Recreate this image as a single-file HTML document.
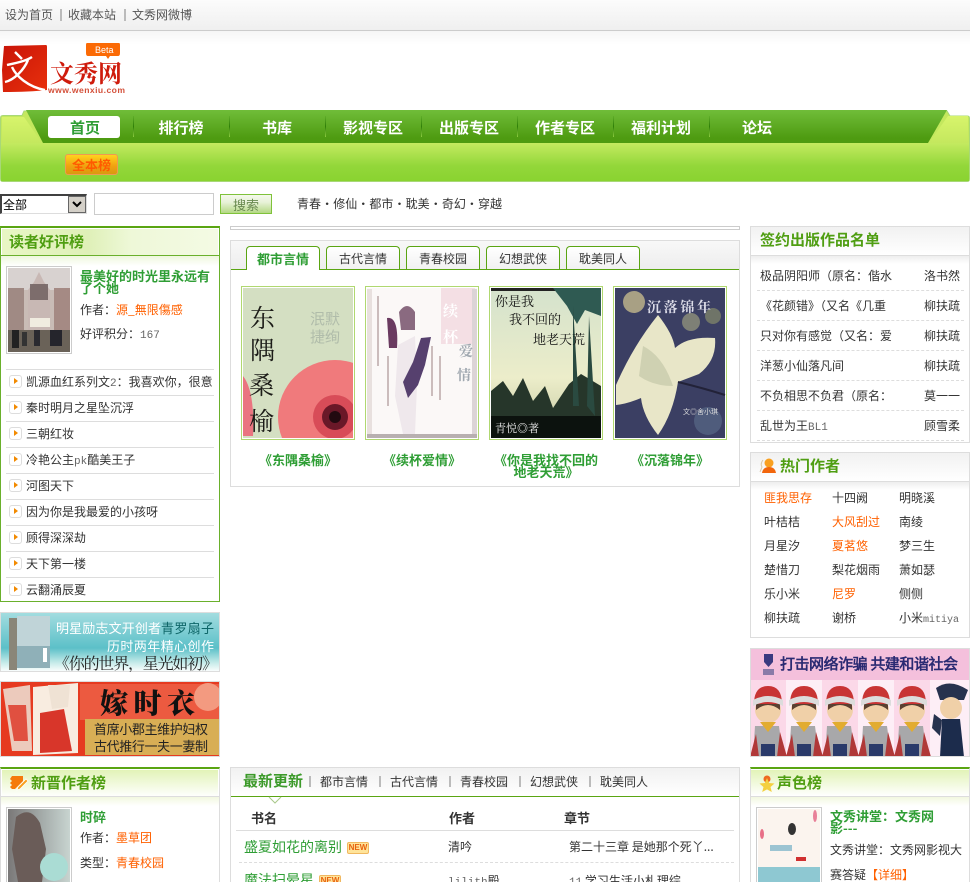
<!DOCTYPE html>
<html lang="zh"><head><meta charset="utf-8"><title>文秀网</title>
<style>
html,body{margin:0;padding:0;background:#fff;width:970px;height:882px;overflow:hidden}
#w{width:970px;height:882px;overflow:hidden;position:relative;font:12px/16px "WenQuanYi Zen Hei","Noto Sans CJK SC",sans-serif;color:#333}
.a{position:absolute;white-space:nowrap}
.b{position:absolute;box-sizing:border-box}
.g{font-weight:bold;color:#2f9e35}
.o{color:#ff6000}
.h{font-weight:bold;font-size:15px;color:#4f9e12}
.nav{position:absolute;top:119px;width:96px;text-align:center;color:#fff;font-weight:bold;font-size:15px;line-height:18px}
.sep{position:absolute;top:116px;width:1px;height:21px;background:linear-gradient(#5fae28,#2f7f08,#8ccc40)}
.ln{position:absolute;height:1px;background:#ddd}
.dash{position:absolute;height:0;border-top:1px dashed #ddd}
.ic{position:absolute;left:9px;width:11px;height:11px;border:1px solid #ddd;border-radius:3px;background:#fff}
.ic:after{content:"";position:absolute;left:4px;top:2px;border-left:4px solid #f28a00;border-top:3px solid transparent;border-bottom:3px solid transparent}
.tab{position:absolute;top:246px;width:74px;height:23px;box-sizing:border-box;border:1px solid #5aa512;border-bottom:0;border-radius:4px 4px 0 0;background:linear-gradient(#fff,#f1f1f1);text-align:center;line-height:23px}
.cap{position:absolute;width:114px;text-align:center;font-size:13px;line-height:12px;font-weight:bold;color:#2f9e35}
.new{position:absolute;width:20px;height:10px;border:1px solid #f0b860;background:#ffe49a;color:#e8600c;font:bold 8px/10px "Liberation Sans",sans-serif;text-align:center;border-radius:2px}
.m{font-family:"Liberation Mono",monospace;font-size:11px;color:#666}
.dot{display:inline-block;width:12.200px;text-align:center}
svg{position:absolute;display:block}
</style></head><body><div id="w">

<!-- top bar -->
<div class="b" style="left:0;top:0;width:970px;height:31px;background:linear-gradient(#fcfcfc,#efefef);border-bottom:1px solid #ccc"></div>
<div class="b" style="left:0;top:31px;width:970px;height:14px;background:linear-gradient(#f6f6f6,#fff)"></div>
<div class="a" style="left:5px;top:7px;color:#555">设为首页</div>
<div class="b" style="left:60px;top:9px;width:2px;height:12px;background:#bbb"></div>
<div class="a" style="left:68px;top:7px;color:#555">收藏本站</div>
<div class="b" style="left:124px;top:9px;width:2px;height:12px;background:#bbb"></div>
<div class="a" style="left:132px;top:7px;color:#555">文秀网微博</div>

<!-- logo -->
<svg style="left:0;top:40px" width="130" height="56" viewBox="0 0 130 56">
<defs><linearGradient id="rd" x1="0" y1="0" x2="1" y2="1"><stop offset="0" stop-color="#c81408"/><stop offset="1" stop-color="#e8300c"/></linearGradient></defs>
<path d="M4 6 L46 5 Q47 5 47 7 L47 50 Q30 52 3 52 L2 30Z" fill="url(#rd)"/>
<path d="M15 12 L22 19 M7 25 C16 23 26 21 32 17 M28 20 C24 30 14 40 5 42 M12 27 C16 36 28 47 45 50" fill="none" stroke="#fff" stroke-width="2.400"/>
<path d="M87 3 H119 Q120 3 120 5 V13 Q120 16 118 16 H110 L108 19 L106 16 H88 Q86 16 86 13 V5 Q86 3 87 3Z" fill="#fb6a05"/>
<text x="95" y="13" font-family="Liberation Sans" font-size="9" fill="#fff">Beta</text>
<text x="50" y="42" font-family="Noto Serif CJK SC" font-weight="700" font-size="24" fill="#cf1b0c">文秀网</text>
<text x="48" y="53" font-family="Liberation Sans" font-weight="700" font-size="8.600" fill="#d4503a" textLength="77">www.wenxiu.com</text>
</svg>

<!-- nav -->
<svg style="left:0;top:108px" width="970" height="76" viewBox="0 0 970 76">
<defs>
<linearGradient id="d" x1="0" y1="0" x2="0" y2="1"><stop offset="0" stop-color="#70bd39"/><stop offset=".85" stop-color="#4e9b11"/><stop offset="1" stop-color="#4e9b11"/></linearGradient>
<linearGradient id="l" x1="0" y1="0" x2="0" y2="1"><stop offset="0" stop-color="#c4ea60"/><stop offset=".6" stop-color="#93d73a"/><stop offset="1" stop-color="#8ad330"/></linearGradient>
<linearGradient id="t" x1="0" y1="0" x2="0" y2="1"><stop offset="0" stop-color="#d8f46c"/><stop offset="1" stop-color="#c4e85e"/></linearGradient>
</defs>
<path d="M.5 10 Q.5 7.500 3 7.500 H22 L24 3 H947 L950 8 H967 Q969.500 8 969.500 10 V71 Q969.500 73.500 967 73.500 H3 Q.5 73.500 .5 71Z" fill="#c4e85e" stroke="#a8d878"/>
<rect x="1" y="35" width="968" height="38" fill="url(#l)"/>
<path d="M26 2 H947 L928 35 H43Z" fill="url(#d)"/>
<path d="M2 9 H24 L42 35 H2Z M948 8 H968 V35 H929Z" fill="url(#t)"/>
</svg>
<div class="b" style="left:48px;top:116px;width:72px;height:22px;background:#fff;border-radius:3px"></div>
<div class="nav" style="left:37px;color:#2f9e35">首页</div>
<div class="nav" style="left:133px">排行榜</div>
<div class="nav" style="left:229px">书库</div>
<div class="nav" style="left:325px">影视专区</div>
<div class="nav" style="left:421px">出版专区</div>
<div class="nav" style="left:517px">作者专区</div>
<div class="nav" style="left:613px">福利计划</div>
<div class="nav" style="left:709px">论坛</div>
<div class="sep" style="left:133px"></div><div class="sep" style="left:229px"></div><div class="sep" style="left:325px"></div><div class="sep" style="left:421px"></div><div class="sep" style="left:517px"></div><div class="sep" style="left:613px"></div><div class="sep" style="left:709px"></div>
<div class="b" style="left:65px;top:154px;width:53px;height:21px;border-radius:3px;background:linear-gradient(#ffd21e,#f0a010 60%,#d89a10);border:1px solid #ef9a50;text-align:center;font-weight:bold;font-size:13px;line-height:20px;color:#ff5a00">全本榜</div>

<!-- search -->
<div class="b" style="left:0;top:194px;width:87px;height:20px;background:#d4d0c8;border-top:2px solid #404040;border-left:2px solid #404040;border-right:1px solid #ddd;border-bottom:1px solid #ddd"><div class="b" style="left:0;top:0;width:66px;height:17px;background:#fff;line-height:18px;padding-left:1px;color:#000">全部</div>
<div class="b" style="left:66px;top:0;width:18px;height:17px;background:#d4d0c8;border:1px solid #666"><svg width="16" height="15" style="left:0;top:0"><path d="M4 5 L8 9 L12 5" fill="none" stroke="#000" stroke-width="2"/></svg></div></div>
<div class="b" style="left:94px;top:193px;width:120px;height:22px;border:1px solid #ccc;background:#fff"></div>
<div class="b" style="left:220px;top:194px;width:52px;height:20px;border:1px solid #7fc23a;background:linear-gradient(#f4f8ec,#e8f2d8 40%,#b4d884);text-align:center;line-height:19px;font-size:13px;color:#6a8a50">搜索</div>
<div class="a" style="left:297px;top:196px;color:#333">青春<span class="dot">·</span>修仙<span class="dot">·</span>都市<span class="dot">·</span>耽美<span class="dot">·</span>奇幻<span class="dot">·</span>穿越</div>

<!-- left panel 1 -->
<div class="b" style="left:0;top:226px;width:220px;height:376px;border:1px solid #6ab02c;border-top:2px solid #5aa512"></div>
<div class="b" style="left:2px;top:229px;width:216px;height:26px;background:linear-gradient(90deg,#e8f6c4,#dff0b8 40%,#eef8d8 60%,#f4fae4)"></div>
<div class="b" style="left:1px;top:255px;width:218px;height:1px;background:#6ab02c"></div>
<div class="b" style="left:1px;top:256px;width:218px;height:10px;background:linear-gradient(#eef7dd,#fff)"></div>
<div class="a h" style="left:9px;top:234px">读者好评榜</div>
<div class="b" style="left:6px;top:266px;width:66px;height:88px;border:1px solid #ccc;padding:1px">
<svg width="62" height="84" style="left:1px;top:1px" viewBox="0 0 62 84"><rect width="62" height="84" fill="#c9bcb6"/><rect width="62" height="22" fill="#d8d2d0"/><rect x="0" y="20" width="16" height="46" fill="#a08a84"/><rect x="46" y="20" width="16" height="46" fill="#a58a84"/><path d="M26 14 L31 4 L36 14 L42 22 V64 H20 V22Z" fill="#c8b8b4"/><rect x="22" y="16" width="18" height="16" fill="#6a5a5a" opacity=".8"/><rect x="22" y="50" width="20" height="9" fill="#f0ece0"/><rect y="62" width="62" height="22" fill="#6a6258"/><rect x="4" y="62" width="7" height="18" fill="#222"/><rect x="14" y="64" width="5" height="14" fill="#333"/><rect x="26" y="62" width="6" height="16" fill="#2a2a30"/><rect x="42" y="62" width="12" height="16" fill="#25252c"/></svg></div>
<div class="a" style="left:80px;top:270px;width:132px;white-space:normal;font-size:13px;line-height:12px;font-weight:bold;color:#2f9e35">最美好的时光里永远有了个她</div>
<div class="a" style="left:80px;top:302px">作者：<span class="o">源_無限傷感</span></div>
<div class="a" style="left:80px;top:326px">好评积分：<span class="m">167</span></div>
<div class="ln" style="left:6px;top:369px;width:208px"></div>
<div class="ln" style="left:6px;top:395px;width:208px"></div>
<div class="ln" style="left:6px;top:421px;width:208px"></div>
<div class="ln" style="left:6px;top:447px;width:208px"></div>
<div class="ln" style="left:6px;top:473px;width:208px"></div>
<div class="ln" style="left:6px;top:499px;width:208px"></div>
<div class="ln" style="left:6px;top:525px;width:208px"></div>
<div class="ln" style="left:6px;top:551px;width:208px"></div>
<div class="ln" style="left:6px;top:577px;width:208px"></div>
<div class="ic" style="top:375px"></div><div class="a" style="left:26px;top:374px">凯源血红系列文<span class="m">2</span>：我喜欢你，很意</div>
<div class="ic" style="top:401px"></div><div class="a" style="left:26px;top:400px">秦时明月之星坠沉浮</div>
<div class="ic" style="top:427px"></div><div class="a" style="left:26px;top:426px">三朝红妆</div>
<div class="ic" style="top:453px"></div><div class="a" style="left:26px;top:452px">冷艳公主<span class="m">pk</span>酷美王子</div>
<div class="ic" style="top:479px"></div><div class="a" style="left:26px;top:478px">河图天下</div>
<div class="ic" style="top:505px"></div><div class="a" style="left:26px;top:504px">因为你是我最爱的小孩呀</div>
<div class="ic" style="top:531px"></div><div class="a" style="left:26px;top:530px">顾得深深劫</div>
<div class="ic" style="top:557px"></div><div class="a" style="left:26px;top:556px">天下第一楼</div>
<div class="ic" style="top:583px"></div><div class="a" style="left:26px;top:582px">云翻涌辰夏</div>

<!-- banners left -->
<svg style="left:0;top:612px" width="220" height="60" viewBox="0 0 220 60">
<defs><linearGradient id="sea" x1="0" y1="0" x2="0" y2="1"><stop offset="0" stop-color="#a4dde0"/><stop offset=".6" stop-color="#5cc0c8"/><stop offset=".85" stop-color="#c8ecea"/><stop offset="1" stop-color="#fff"/></linearGradient></defs>
<rect width="220" height="60" fill="url(#sea)"/><rect x=".5" y=".5" width="219" height="59" fill="none" stroke="#ddd"/>
<rect x="9" y="6" width="8" height="52" fill="#8a8678"/><rect x="17" y="4" width="33" height="52" fill="#c0d4d8"/><rect x="17" y="34" width="33" height="22" fill="#8fb0b8"/><rect x="43" y="36" width="4" height="14" fill="#fff"/>
<text x="56" y="21" font-family="WenQuanYi Zen Hei" font-size="13" fill="#fff" textLength="105">明星励志文开创者</text>
<text x="161" y="21" font-family="WenQuanYi Zen Hei" font-size="13" fill="#0e6668" textLength="53">青罗扇子</text>
<text x="107" y="39" font-family="WenQuanYi Zen Hei" font-size="13" fill="#fff" textLength="107">历时两年精心创作</text>
<text x="54" y="57" font-family="Noto Serif CJK SC" font-size="16" fill="#222" textLength="164">《你的世界，星光如初》</text>
</svg>
<svg style="left:0;top:681px" width="220" height="76" viewBox="0 0 220 76">
<rect width="220" height="76" fill="#e63a20"/><rect x="80" y="3" width="140" height="36" fill="#ec5a40"/><circle cx="208" cy="16" r="14" fill="#f39a80"/><path d="M3 8 L30 4 L32 70 L12 70Z" fill="#eccabc"/><path d="M8 24 L26 24 L28 60 L14 60Z" fill="#e05040"/><path d="M33 6 L78 2 L78 72 L33 74Z" fill="#f8ece0"/><path d="M40 32 L64 28 L72 70 L40 72Z" fill="#d8362a"/><path d="M48 4 L70 4 L68 26 L52 28Z" fill="#efe2d4"/><rect x="85" y="38" width="134" height="36" fill="#d8ae55"/>
<text x="100" y="32" font-family="Noto Serif CJK SC" font-weight="900" font-size="28" fill="#111" textLength="95">嫁时衣</text>
<text x="94" y="53" font-family="WenQuanYi Zen Hei" font-size="13" fill="#222" textLength="114">首席小郡主维护妇权</text>
<text x="94" y="70" font-family="WenQuanYi Zen Hei" font-size="13" fill="#222" textLength="114">古代推行一夫一妻制</text>
<rect x=".5" y=".5" width="219" height="75" fill="none" stroke="#ddd"/>
</svg>

<!-- left panel 2 -->
<div class="b" style="left:0;top:767px;width:220px;height:130px;border:1px solid #ddd;border-top:2px solid #5aa512"></div>
<div class="b" style="left:2px;top:770px;width:216px;height:27px;background:linear-gradient(#e2f3b8,#fff)"></div>
<div class="b" style="left:1px;top:796px;width:218px;height:1px;background:#ddd"></div>
<div class="b" style="left:1px;top:797px;width:218px;height:9px;background:linear-gradient(#f2f8e0,#fff)"></div>
<svg style="left:9px;top:775px" width="20" height="16" viewBox="0 0 20 16"><path d="M3 1 H14 V6 L8 12 L6 14 H3 L1 12 L3 10 L1 8 L3 6 L1 4Z" fill="#f57a0c"/><path d="M9 12 L17 4 L19 6 L11 14 L8 15Z" fill="#f8a020" stroke="#fff" stroke-width=".8"/></svg>
<div class="a h" style="left:31px;top:775px">新晋作者榜</div>
<div class="b" style="left:6px;top:807px;width:66px;height:90px;border:1px solid #ccc"></div>
<svg style="left:8px;top:809px" width="62" height="73" viewBox="0 0 62 73"><defs><linearGradient id="p" x1="0" y1="0" x2="1" y2="0"><stop offset="0" stop-color="#7a7878"/><stop offset=".6" stop-color="#a8b0ae"/><stop offset="1" stop-color="#c8d4d0"/></linearGradient></defs><rect width="62" height="73" fill="url(#p)"/><path d="M8 8 Q22 -4 32 14 L38 40 L34 73 H10 L4 40Z" fill="#6a5c58"/><ellipse cx="46" cy="58" rx="14" ry="14" fill="#aadcd4"/></svg>
<div class="a g" style="left:80px;top:809px;font-size:13px">时碎</div>
<div class="a" style="left:80px;top:830px">作者：<span class="o">墨草团</span></div>
<div class="a" style="left:80px;top:855px">类型：<span class="o">青春校园</span></div>

<!-- center top -->
<div class="b" style="left:230px;top:226px;width:510px;height:4px;border:1px solid #ccc"></div>
<div class="b" style="left:230px;top:240px;width:510px;height:247px;border:1px solid #ddd"></div>
<div class="b" style="left:231px;top:241px;width:508px;height:28px;background:linear-gradient(#f8f8f8,#ededed)"></div>
<div class="b" style="left:231px;top:269px;width:508px;height:1px;background:#5aa512"></div>
<div class="tab g" style="left:246px;height:24px;background:#fff;font-size:13px;line-height:24px">都市言情</div>
<div class="tab" style="left:326px">古代言情</div>
<div class="tab" style="left:406px">青春校园</div>
<div class="tab" style="left:486px">幻想武侠</div>
<div class="tab" style="left:566px">耽美同人</div>

<svg style="left:241px;top:286px" width="114" height="154" viewBox="0 0 114 154"><rect width="114" height="154" fill="#fff"/><rect x="2" y="2" width="110" height="150" fill="#d4dfc2"/><path d="M2 90 Q14 105 12 150 H2Z" fill="#ea7480"/><clipPath id="c1"><rect x="2" y="2" width="110" height="150"/></clipPath><g clip-path="url(#c1)"><circle cx="94" cy="131" r="57" fill="#f07a7c"/><circle cx="94" cy="131" r="22" fill="#d84c58"/><circle cx="94" cy="131" r="13" fill="#6a1828"/><circle cx="94" cy="131" r="6" fill="#220a10"/></g><g font-family="Noto Serif CJK SC" font-size="25" fill="#1c1c18"><text x="9" y="41">东</text><text x="9" y="73">隅</text><text x="8" y="108">桑</text><text x="8" y="144">榆</text></g><g font-family="WenQuanYi Zen Hei" font-size="15" fill="#b0bcaa"><text x="69" y="38">泯默</text><text x="69" y="56">捷绚</text></g><rect x=".5" y=".5" width="113" height="153" fill="none" stroke="#b0d870"/></svg>

<svg style="left:365px;top:286px" width="114" height="154" viewBox="0 0 114 154"><rect width="114" height="154" fill="#fff"/><rect x="2" y="2" width="110" height="150" fill="#fbf8f7"/><rect x="76" y="2" width="34" height="56" fill="#f4dfe4"/><rect x="2" y="3" width="5" height="146" fill="#e8e0de"/><rect x="107" y="3" width="5" height="146" fill="#dcd4d6"/><path d="M33 59 L50 50 L52 100 L50 148 H38 L30 110Z" fill="#efe8ec"/><path d="M34 26 Q42 14 50 26 L50 44 L36 44Z" fill="#8a6a80"/><path d="M22 32 Q34 30 32 62 L24 62Z" fill="#6a3a60"/><path d="M56 52 L66 51 L60 79 L53 99 L43 112 L38 96 L48 76Z" fill="#56406e"/><rect x="2" y="148" width="110" height="4" fill="#b8b0b0"/><g font-family="Noto Serif CJK SC" font-size="15" font-weight="700" fill="#fff"><text x="78" y="30">续</text><text x="78" y="56">杯</text></g><g font-family="Noto Serif CJK SC" font-size="14" font-weight="700" fill="#a0a8b0"><text x="94" y="70">爱</text><text x="92" y="94">情</text></g><g fill="#cbbcbc"><rect x="66" y="60" width="2" height="50"/><rect x="74" y="70" width="2" height="44"/><rect x="12" y="10" width="2" height="70"/><rect x="22" y="70" width="2" height="50"/></g><rect x=".5" y=".5" width="113" height="153" fill="none" stroke="#b0d870"/></svg>

<svg style="left:489px;top:286px" width="114" height="154" viewBox="0 0 114 154"><defs><linearGradient id="n" x1="0" y1="0" x2="0" y2="1"><stop offset="0" stop-color="#d4e2cc"/><stop offset=".6" stop-color="#ecedca"/><stop offset="1" stop-color="#c4c8a0"/></linearGradient></defs><rect width="114" height="154" fill="#fff"/><rect x="2" y="2" width="110" height="150" fill="url(#n)"/><rect x="2" y="2" width="110" height="3" fill="#222"/><path d="M2 105 L14 95 L24 110 L34 92 L44 115 L56 100 L64 122 L80 98 L92 88 L112 100 V152 H2Z" fill="#26362a"/><path d="M64 2 L112 2 L112 30 L96 24 L88 38 L78 20Z" fill="#2f5a52"/><path d="M84 20 L90 120 H84Z M100 30 L106 130 L98 120Z" fill="#2a4a40"/><path d="M2 130 H112 V152 H2Z" fill="#0c120e"/><g font-family="Noto Serif CJK SC" font-size="13" fill="#111"><text x="6" y="20">你是我</text><text x="20" y="38">我不回的</text><text x="44" y="58">地老天荒</text></g><g font-family="Noto Serif CJK SC" font-size="11" fill="#eee"><text x="6" y="146">青悦◎著</text></g><rect x=".5" y=".5" width="113" height="153" fill="none" stroke="#b0d870"/></svg>

<svg style="left:613px;top:286px" width="114" height="154" viewBox="0 0 114 154"><rect width="114" height="154" fill="#fff"/><rect x="2" y="2" width="110" height="150" fill="#3b3f63"/><circle cx="21" cy="16" r="11" fill="#a8a084"/><circle cx="78" cy="36" r="9" fill="#7e8076"/><circle cx="100" cy="30" r="8" fill="#6f7468"/><circle cx="95" cy="135" r="14" fill="#4f5c7c"/><path d="M3 99 Q20 60 45 29 Q60 48 62 62 Q75 50 102 52 Q104 74 86 88 L65 96 Q60 128 45 149 Q30 130 28 112 Q14 118 3 119Z" fill="#e8e6c8"/><path d="M30 60 Q50 70 60 100 Q40 100 26 90Z" fill="#cfd1b2"/><path d="M65 96 Q90 102 112 109" fill="none" stroke="#222238" stroke-width="2"/><text x="34" y="26" font-family="Noto Serif CJK SC" font-size="14" font-weight="700" fill="#dcdce8" textLength="64">沉落锦年</text><text x="70" y="128" font-family="WenQuanYi Zen Hei" font-size="7" fill="#ddd">文◎舍小琪</text><rect x=".5" y=".5" width="113" height="153" fill="none" stroke="#b0d870"/></svg>

<div class="cap" style="left:241px;top:454px">《东隅桑榆》</div>
<div class="cap" style="left:365px;top:454px">《续杯爱情》</div>
<div class="cap" style="left:489px;top:454px">《你是我找不回的地老天荒》</div>
<div class="cap" style="left:613px;top:454px">《沉落锦年》</div>

<!-- update box -->
<div class="b" style="left:230px;top:767px;width:510px;height:130px;border:1px solid #ddd"></div>
<div class="b" style="left:231px;top:768px;width:508px;height:28px;background:linear-gradient(#f1f1f1,#fff)"></div>
<div class="b" style="left:231px;top:796px;width:508px;height:1px;background:#5aa512"></div>
<svg style="left:268px;top:796px" width="14" height="8"><path d="M1 1 L7 7 L13 1" fill="#fff" stroke="#a9c88a"/></svg>
<div class="a g" style="left:243px;top:773px;font-size:15px;color:#3c9a2a">最新更新</div>
<div class="a" style="left:320px;top:774px">都市言情</div><div class="a" style="left:390px;top:774px">古代言情</div><div class="a" style="left:460px;top:774px">青春校园</div><div class="a" style="left:530px;top:774px">幻想武侠</div><div class="a" style="left:600px;top:774px">耽美同人</div>
<div class="b" style="left:309px;top:776px;width:2px;height:11px;background:#bbb"></div><div class="b" style="left:379px;top:776px;width:2px;height:11px;background:#bbb"></div><div class="b" style="left:449px;top:776px;width:2px;height:11px;background:#bbb"></div><div class="b" style="left:519px;top:776px;width:2px;height:11px;background:#bbb"></div><div class="b" style="left:589px;top:776px;width:2px;height:11px;background:#bbb"></div>
<div class="a" style="left:251px;top:810px;font-weight:bold;font-size:13px">书名</div>
<div class="a" style="left:449px;top:810px;font-weight:bold;font-size:13px">作者</div>
<div class="a" style="left:564px;top:810px;font-weight:bold;font-size:13px">章节</div>
<div class="ln" style="left:236px;top:830px;width:498px"></div>
<div class="a" style="left:244px;top:839px;font-size:14px;color:#2f9e35">盛夏如花的离别</div>
<div class="new" style="left:347px;top:842px">NEW</div>
<div class="a" style="left:448px;top:839px">清吟</div>
<div class="a" style="left:569px;top:839px">第二十三章 是她那个死丫...</div>
<div class="dash" style="left:239px;top:862px;width:495px"></div>
<div class="a" style="left:244px;top:872px;font-size:14px;color:#2f9e35">魔法扫晕星</div>
<div class="new" style="left:319px;top:875px">NEW</div>
<div class="a" style="left:448px;top:873px"><span class="m">lilith</span>殿</div>
<div class="a" style="left:569px;top:873px"><span class="m">11</span> 学习生活小札理综</div>

<!-- right 1 -->
<div class="b" style="left:750px;top:226px;width:220px;height:217px;border:1px solid #ddd"></div>
<div class="b" style="left:751px;top:227px;width:218px;height:28px;background:linear-gradient(#f1f1f1,#fff)"></div>
<div class="b" style="left:751px;top:255px;width:218px;height:1px;background:#ddd"></div>
<div class="b" style="left:751px;top:256px;width:218px;height:8px;background:linear-gradient(#eee,#fff)"></div>
<div class="a h" style="left:760px;top:232px">签约出版作品名单</div>
<div class="a" style="left:760px;top:268px">极品阴阳师（原名：偕水</div><div class="a" style="left:924px;top:268px">洛书然</div>
<div class="dash" style="left:757px;top:290px;width:207px"></div>
<div class="a" style="left:760px;top:298px">《花颜错》（又名《几重</div><div class="a" style="left:924px;top:298px">柳扶疏</div>
<div class="dash" style="left:757px;top:320px;width:207px"></div>
<div class="a" style="left:760px;top:328px">只对你有感觉（又名：爱</div><div class="a" style="left:924px;top:328px">柳扶疏</div>
<div class="dash" style="left:757px;top:350px;width:207px"></div>
<div class="a" style="left:760px;top:358px">洋葱小仙落凡间</div><div class="a" style="left:924px;top:358px">柳扶疏</div>
<div class="dash" style="left:757px;top:380px;width:207px"></div>
<div class="a" style="left:760px;top:388px">不负相思不负君（原名：</div><div class="a" style="left:924px;top:388px">莫一一</div>
<div class="dash" style="left:757px;top:410px;width:207px"></div>
<div class="a" style="left:760px;top:418px">乱世为王<span class="m">BL1</span></div><div class="a" style="left:924px;top:418px">顾雪柔</div>
<div class="dash" style="left:757px;top:440px;width:207px"></div>

<!-- right 2 -->
<div class="b" style="left:750px;top:452px;width:220px;height:186px;border:1px solid #ddd"></div>
<div class="b" style="left:751px;top:453px;width:218px;height:28px;background:linear-gradient(#f1f1f1,#fff)"></div>
<div class="b" style="left:751px;top:481px;width:218px;height:1px;background:#ddd"></div>
<div class="b" style="left:751px;top:482px;width:218px;height:8px;background:linear-gradient(#eee,#fff)"></div>
<svg style="left:759px;top:458px" width="18" height="16" viewBox="0 0 18 16"><circle cx="10" cy="5" r="4.500" fill="#f9a020"/><path d="M3 15 Q4 9 10 9 Q16 9 17 15Z" fill="#f2660c"/><path d="M4 2 Q1 6 3 9 L1 14" fill="none" stroke="#d8c8a8"/></svg>
<div class="a h" style="left:780px;top:458px">热门作者</div>
<div class="a o" style="left:764px;top:490px">匪我思存</div><div class="a" style="left:832px;top:490px">十四阙</div><div class="a" style="left:899px;top:490px">明晓溪</div>
<div class="a" style="left:764px;top:514px">叶桔桔</div><div class="a o" style="left:832px;top:514px">大风刮过</div><div class="a" style="left:899px;top:514px">南绫</div>
<div class="a" style="left:764px;top:538px">月星汐</div><div class="a o" style="left:832px;top:538px">夏茗悠</div><div class="a" style="left:899px;top:538px">梦三生</div>
<div class="a" style="left:764px;top:562px">楚惜刀</div><div class="a" style="left:832px;top:562px">梨花烟雨</div><div class="a" style="left:899px;top:562px">萧如瑟</div>
<div class="a" style="left:764px;top:586px">乐小米</div><div class="a o" style="left:832px;top:586px">尼罗</div><div class="a" style="left:899px;top:586px">侧侧</div>
<div class="a" style="left:764px;top:610px">柳扶疏</div><div class="a" style="left:832px;top:610px">谢桥</div><div class="a" style="left:899px;top:610px">小米<span class="m" style="font-size:10px">mitiya</span></div>

<!-- police banner -->
<svg style="left:750px;top:648px" width="220" height="109" viewBox="0 0 220 109">
<rect width="220" height="109" fill="#f4c0dc"/>
<rect y="32" width="220" height="77" fill="#fbd8e8"/>
<g fill="#fdeef6"><rect x="36" y="32" width="36" height="77"/><rect x="108" y="32" width="36" height="77"/><rect x="180" y="32" width="40" height="77"/></g>
<path d="M14 6 h9 v8 l-4.500 5 l-4.500 -5Z" fill="#3a3a80"/><rect x="13" y="21" width="11" height="6" fill="#8a7aa8"/>
<text x="30" y="21" font-family="WenQuanYi Zen Hei" font-size="15" font-weight="700" fill="#2a2a72" textLength="178">打击网络诈骗 共建和谐社会</text>
<g id="k"><path d="M3 109 L5 78 L29 78 L33 109Z" fill="#a8a8aa"/><path d="M6 86 L0 109 H9Z M30 84 L37 109 H27Z" fill="#b03838"/><circle cx="18" cy="62" r="13" fill="#f0d0a8"/><path d="M6 62 Q18 52 30 62 L30 56 H6Z" fill="#5a4030"/><path d="M4 56 Q4 38 18 38 Q32 38 32 56Z" fill="#c83434"/><path d="M3 52 Q18 44 33 52 L33 58 Q18 50 3 58Z" fill="#dcdcdc"/><path d="M10 74 H26 L18 84Z" fill="#e2ac30"/><rect x="11" y="96" width="14" height="13" fill="#2a3a6a"/></g>
<use href="#k" x="36"/><use href="#k" x="72"/><use href="#k" x="108"/><use href="#k" x="144"/>
<path d="M186 40 Q200 30 218 42 L214 52 H190Z" fill="#26324e"/><circle cx="201" cy="60" r="11" fill="#f0d0a8"/><path d="M192 71 H210 L214 109 H190Z" fill="#1c2c4c"/><path d="M184 66 L192 72 L190 88 L182 80Z" fill="#26324e"/>
<rect x=".5" y=".5" width="219" height="108" fill="none" stroke="#ddd"/>
</svg>

<!-- right 3 -->
<div class="b" style="left:750px;top:767px;width:220px;height:130px;border:1px solid #ddd;border-top:2px solid #5aa512"></div>
<div class="b" style="left:751px;top:770px;width:218px;height:26px;background:linear-gradient(#e2f3b8,#fff)"></div>
<div class="b" style="left:751px;top:796px;width:218px;height:1px;background:#ddd"></div>
<div class="b" style="left:751px;top:797px;width:218px;height:9px;background:linear-gradient(#f2f8e0,#fff)"></div>
<svg style="left:759px;top:775px" width="16" height="18" viewBox="0 0 16 18"><circle cx="8" cy="4" r="3.500" fill="#ee6a20"/><path d="M8 3 L10.200 8 L15.500 8.500 L11.500 12 L12.800 17 L8 14.400 L3.200 17 L4.500 12 L.5 8.500 L5.800 8Z" fill="#f4d040"/></svg>
<div class="a h" style="left:777px;top:775px">声色榜</div>
<div class="b" style="left:756px;top:807px;width:66px;height:90px;border:1px solid #ccc"></div>
<svg style="left:758px;top:809px" width="62" height="73" viewBox="0 0 62 73"><rect width="62" height="58" fill="#fbf4ee"/><rect y="58" width="62" height="15" fill="#8ec8d2"/><ellipse cx="34" cy="20" rx="4" ry="6" fill="#333"/><ellipse cx="57" cy="7" rx="2" ry="6" fill="#e88098"/><ellipse cx="4" cy="25" rx="2" ry="5" fill="#e87088"/><rect x="12" y="36" width="22" height="6" fill="#9cc4d2"/><rect x="38" y="48" width="10" height="4" fill="#d03030"/></svg>
<div class="a" style="left:830px;top:810px;width:106px;height:24px;overflow:hidden;white-space:normal;font-size:13px;line-height:12px;font-weight:bold;color:#2f9e35">文秀讲堂：文秀网影---</div>
<div class="a" style="left:830px;top:842px">文秀讲堂：文秀网影视大</div>
<div class="a" style="left:830px;top:867px">赛答疑<span class="o">【详细】</span></div>

</div></body></html>
